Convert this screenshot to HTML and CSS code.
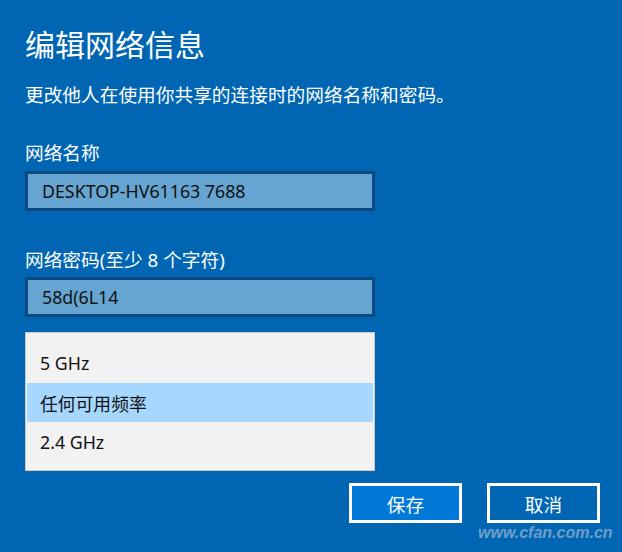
FILE: index.html
```html
<!DOCTYPE html>
<html lang="zh-CN">
<head>
  <meta charset="UTF-8" />
  <meta name="viewport" content="width=device-width, initial-scale=1.0"/>
  <title>编辑网络信息</title>
  <link rel="stylesheet" href="styles.css">
</head>
<body>
  <div class="dialog">
    <h1>编辑网络信息</h1>
    <p class="intro">更改他人在使用你共享的连接时的网络名称和密码。</p>

    <label class="field-label" for="netName">网络名称</label>
    <div class="field" id="netName">DESKTOP-HV61163 7688</div>

    <label class="field-label field-label-second" for="netPass">网络密码(至少 8 个字符)</label>
    <div class="field" id="netPass">58d(6L14</div>

    <ul class="band-list">
      <li>5 GHz</li>
      <li class="selected">任何可用频率</li>
      <li>2.4 GHz</li>
    </ul>

    <div class="actions">
      <button class="btn btn-primary">保存</button>
      <button class="btn">取消</button>
    </div>
  </div>

  <div class="watermark">www.cfan.com.cn</div>
</body>
</html>
```

FILE: styles.css
```css
body {
  margin: 0;
  background: #0066b3;
  color: white;
  font-family: "Noto Sans", "Noto Sans CJK SC", sans-serif;
  width: 622px;
  height: 552px;
  overflow: hidden;
  position: relative;
}
.dialog {
  padding: 30px 22px 0 25px;
}
h1 {
  margin: 0;
  font-size: 30px;
  line-height: 30px;
  font-weight: normal;
}
.intro {
  margin: 25px 0 0;
  font-size: 18.7px;
  line-height: 20px;
}
.field-label {
  display: block;
  margin-top: 38px;
  font-size: 18.7px;
  line-height: 20px;
}
.field-label-second {
  margin-top: 39px;
}
.field {
  box-sizing: border-box;
  width: 350px;
  height: 40px;
  margin-top: 8px;
  padding-left: 14px;
  display: flex;
  align-items: center;
  background: #66a5d2;
  border: 3px solid #0b4a80;
  color: #111;
  font-size: 17.8px;
}
.field-label-second + .field {
  margin-top: 7px;
}
.band-list {
  box-sizing: border-box;
  list-style: none;
  width: 350px;
  height: 139px;
  margin: 15px 0 0;
  padding: 10px 1px 8px;
  background: #f2f2f2;
  border: 1px solid #c9c9c9;
  color: #111;
  font-size: 17.8px;
}
.band-list li {
  height: 40px;
  padding-left: 13px;
  display: flex;
  align-items: center;
}
.band-list li.selected {
  height: 39px;
  background: #a6d7fe;
}
.actions {
  display: flex;
  justify-content: flex-end;
  gap: 25px;
  margin-top: 12px;
}
.btn {
  box-sizing: border-box;
  width: 113px;
  height: 40px;
  background: transparent;
  border: 3px solid white;
  color: white;
  font-family: inherit;
  font-size: 18.7px;
  cursor: pointer;
}
.btn-primary {
  background: #0078d7;
}
.watermark {
  position: absolute;
  left: 478px;
  top: 524px;
  font-family: "Liberation Sans", sans-serif;
  font-size: 16px;
  font-weight: bold;
  font-style: italic;
  color: #6f9dc8;
}
```
